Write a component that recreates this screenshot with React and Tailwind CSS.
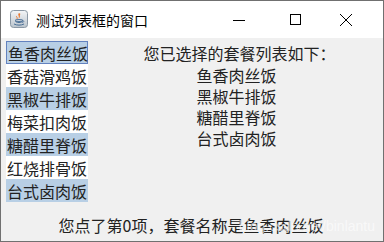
import React from "react";

const items = ["鱼香肉丝饭", "香菇滑鸡饭", "黑椒牛排饭", "梅菜扣肉饭", "糖醋里脊饭", "红烧排骨饭", "台式卤肉饭"];
const selected = [0, 2, 4, 6];
const chosen = ["鱼香肉丝饭", "黑椒牛排饭", "糖醋里脊饭", "台式卤肉饭"];

function JavaIcon() {
  return (
    <svg width="18" height="18" viewBox="0 0 18 18">
      <defs>
        <linearGradient id="g" x1="0" y1="0" x2="0" y2="1">
          <stop offset="0" stopColor="#f4f6f8" />
          <stop offset="1" stopColor="#b9c3cc" />
        </linearGradient>
      </defs>
      <rect x="0.5" y="0.5" width="17" height="17" rx="3" fill="url(#g)" stroke="#8b98a5" />
      <path d="M9 3 C7 5 10 6 8.5 8.5 C11 7 9 5.5 10.5 4 Z" fill="#e8762c" />
      <path d="M6.5 6 C6 7 8 7.5 7 9" stroke="#e8762c" strokeWidth="0.9" fill="none" />
      <ellipse cx="9" cy="10.5" rx="4" ry="1" fill="none" stroke="#4a6f96" strokeWidth="0.9" />
      <path d="M5.5 11 C6 13 12 13 12.5 11" stroke="#4a6f96" strokeWidth="1" fill="none" />
      <path d="M12.5 10.5 C14.5 10.5 14 12.5 12 12.5" stroke="#4a6f96" strokeWidth="0.8" fill="none" />
      <path d="M4 14 C7 15.5 11 15.5 14 14" stroke="#4a6f96" strokeWidth="1" fill="none" />
    </svg>
  );
}

export default function App() {
  const cjk = { fontFamily: '"Noto Sans CJK SC", "Noto Sans", sans-serif' };
  return (
    <div className="w-[384px] h-[242px] border border-[#707070] flex flex-col bg-[#f0f0f0] text-[#222]" style={cjk}>
      <div className="h-[37px] bg-white flex items-center shrink-0">
        <div className="ml-[9px] mt-[-1px]"><JavaIcon /></div>
        <div className="ml-[8px] text-[14px] leading-none text-black">测试列表框的窗口</div>
        <div className="flex-1" />
        <svg width="14" height="14" viewBox="0 0 14 14" className="mr-[43px]">
          <line x1="1" y1="7.5" x2="13" y2="7.5" stroke="#000" strokeWidth="1" />
        </svg>
        <svg width="13" height="13" viewBox="0 0 13 13" className="mr-[37px]">
          <rect x="1.5" y="1.5" width="10" height="10" fill="none" stroke="#000" strokeWidth="1" />
        </svg>
        <svg width="14" height="14" viewBox="0 0 14 14" className="mr-[30px]">
          <line x1="1" y1="1" x2="13" y2="13" stroke="#000" strokeWidth="1" />
          <line x1="13" y1="1" x2="1" y2="13" stroke="#000" strokeWidth="1" />
        </svg>
      </div>
      <div className="flex-1 flex flex-col">
        <div className="flex pt-[3px]">
          <div className="ml-[5px] w-[82px] bg-white flex flex-col">
            {items.map((t, i) => (
              <div
                key={t}
                className={
                  "h-[23px] flex items-center pl-[1px] text-[16px] leading-none whitespace-nowrap " +
                  (selected.includes(i) ? "bg-[#b8cfe5] " : "bg-white ") +
                  (i === 0 ? "border border-[#6382bf] pl-[0px]" : "")
                }
              >
                {t}
              </div>
            ))}
          </div>
          <div className="flex-1 pl-[8px] flex flex-col items-center text-[16px] pt-[1px]">
            <div className="h-[22px] flex items-center leading-none whitespace-nowrap">您已选择的套餐列表如下：</div>
            {chosen.map((t) => (
              <div key={t} className="h-[21px] flex items-center leading-none whitespace-nowrap pr-[6px]">{t}</div>
            ))}
          </div>
        </div>
        <div className="flex-1" />
        <div className="relative h-[30px] flex items-start justify-center text-[16px] leading-[20px] pr-[2px]">
          <span className="whitespace-nowrap mt-[4px]">您点了第0项，套餐名称是鱼香肉丝饭</span>
          <span
            className="absolute right-[8px] top-[5px] text-[14px] text-white/60 whitespace-nowrap"
            style={{ fontFamily: '"Liberation Sans", Arial, sans-serif' }}
          >
            blog.csdn.net/binlantu
          </span>
        </div>
      </div>
    </div>
  );
}
